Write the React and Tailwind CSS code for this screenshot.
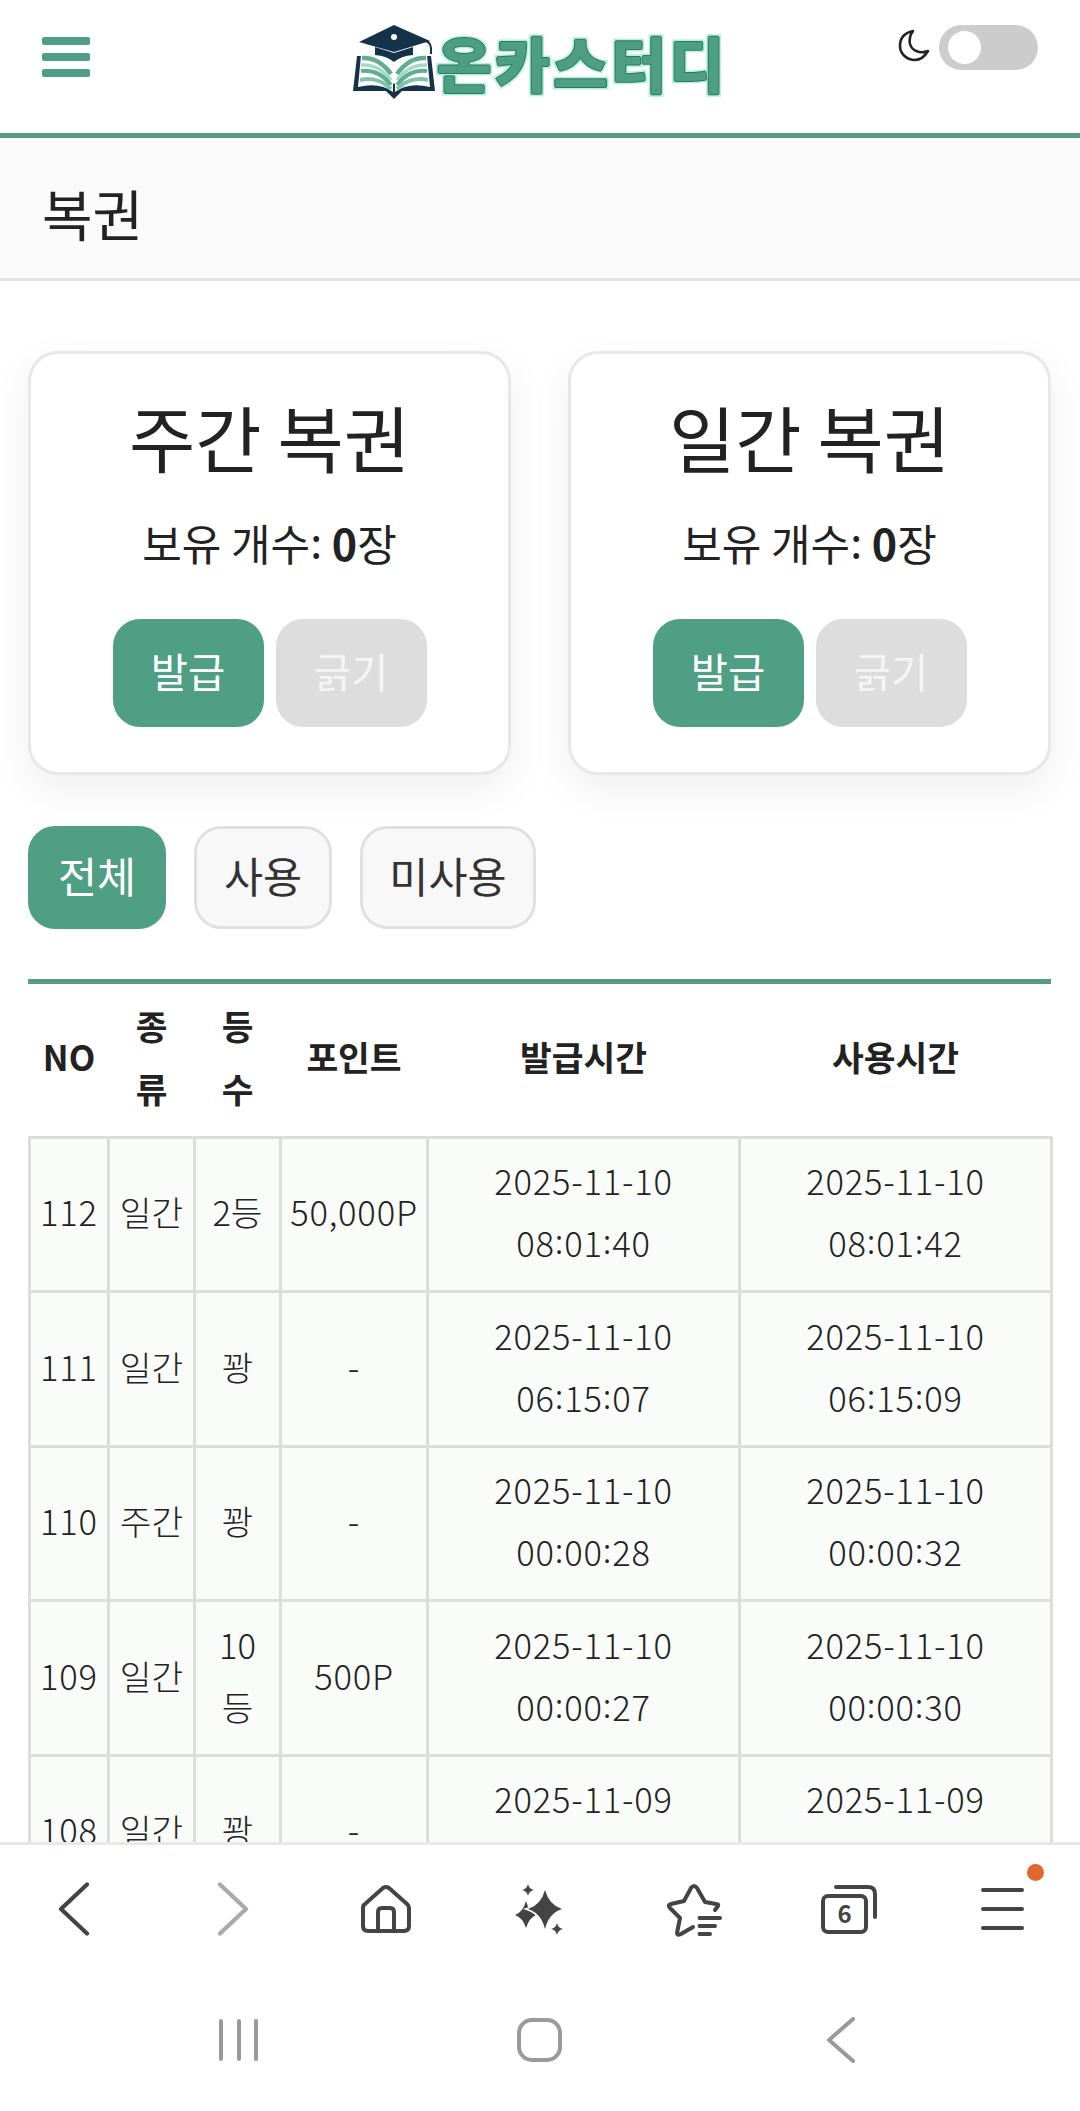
import React from "react";

const rows = [
  ["112", "일간", "2등", "50,000P", "2025-11-10", "08:01:40", "2025-11-10", "08:01:42"],
  ["111", "일간", "꽝", "-", "2025-11-10", "06:15:07", "2025-11-10", "06:15:09"],
  ["110", "주간", "꽝", "-", "2025-11-10", "00:00:28", "2025-11-10", "00:00:32"],
  ["109", "일간", "10등", "500P", "2025-11-10", "00:00:27", "2025-11-10", "00:00:30"],
  ["108", "일간", "꽝", "-", "2025-11-09", "23:59:58", "2025-11-09", "23:59:59"],
];

function LogoMark() {
  return (
    <svg width="84" height="85" viewBox="8 0 84 85" className="shrink-0">
      <path d="M12 36 L8 71 H41 L49 79 L57 71 H90 L86 36 H82 L49 64 L16 36Z" fill="#14334a" />
      <path d="M16 35 Q36 35 48 60 L48 72 Q35 62 13 67Z" fill="#ffffff" />
      <path d="M82 35 Q62 35 50 60 L50 72 Q63 62 85 67Z" fill="#ffffff" />
      <g fill="none" strokeLinecap="butt">
        <path d="M17 38 Q34 37 46 54" stroke="#5fae90" strokeWidth="4.5" />
        <path d="M16 45 Q34 44 46 60" stroke="#a9d9c6" strokeWidth="3.5" />
        <path d="M16 51 Q34 49 46 65" stroke="#5fae90" strokeWidth="4" />
        <path d="M15 60 Q33 56 46 69" stroke="#7fc4aa" strokeWidth="4" />
        <path d="M81 38 Q64 37 52 54" stroke="#5fae90" strokeWidth="4.5" />
        <path d="M82 45 Q64 44 52 60" stroke="#a9d9c6" strokeWidth="3.5" />
        <path d="M82 51 Q64 49 52 65" stroke="#5fae90" strokeWidth="4" />
        <path d="M83 60 Q65 56 52 69" stroke="#7fc4aa" strokeWidth="4" />
      </g>
      <path d="M30 27 V35 Q42 36 49 42 Q56 36 68 35 V27 L49 33Z" fill="#14334a" />
      <path d="M49 5 L14 22 L49 32 L85 21Z" fill="#14334a" />
      <circle cx="49" cy="17" r="3" fill="#ffffff" />
      <path d="M76 20 Q86 21 86 28 V34" fill="none" stroke="#14334a" strokeWidth="2" />
    </svg>
  );
}

function Colon() {
  return <span className="relative -top-[3px]">:</span>;
}

function Time({ value }) {
  const parts = value.split(":");
  return (
    <>
      {parts[0]}
      <Colon />
      {parts[1]}
      <Colon />
      {parts[2]}
    </>
  );
}

function Card({ title }) {
  return (
    <div className="flex flex-col items-center rounded-[30px] border-[3px] border-[#e8e8e8] bg-white pt-[28px] pb-[45px] shadow-[0_14px_40px_rgba(0,0,0,0.07)]">
      <div className="text-[72px] leading-[108px] text-[#222]">{title}</div>
      <div className="mt-[21px] text-[43px] leading-[63px] text-[#222]">
        보유 개수<span className="relative -top-[3px]">:</span> <span className="font-bold">0</span>장
      </div>
      <div className="mt-[45px] flex gap-[12px]">
        <div className="flex h-[108px] w-[151px] items-center justify-center rounded-[27px] bg-[#4e9f83] pb-[3px] text-[40.5px] text-white">발급</div>
        <div className="flex h-[108px] w-[151px] items-center justify-center rounded-[27px] bg-[#dddddd] pb-[3px] text-[40.5px] text-[#f5f5f5]">긁기</div>
      </div>
    </div>
  );
}

const th = "px-[14px] pb-[6px] text-center align-middle text-[34.5px] font-bold leading-[63px] text-[#222]";
const thWide = "pb-[6px] text-center align-middle text-[34.5px] font-bold leading-[63px] text-[#222]";
const td = "border-[3px] border-[#dddddd] bg-[#fafcfa] px-[8px] pt-[10px] pb-[16px] text-center align-middle text-[34.5px] font-light leading-[62px] text-[#222]";
const tdNum = "border-[3px] border-[#dddddd] bg-[#fafcfa] pt-[10px] pb-[16px] text-center align-middle text-[34.5px] font-light leading-[62px] tracking-[0.8px] text-[#222]";

function I({ w, h, vb, children, className }) {
  return (
    <svg width={w} height={h} viewBox={vb} fill="none" className={className}>
      {children}
    </svg>
  );
}

export default function App() {
  return (
    <div className="flex h-[2111px] w-[1080px] flex-col overflow-hidden bg-white font-['Noto_Sans_CJK_KR','Noto_Sans',sans-serif]">
      <div className="min-h-0 flex-1 overflow-hidden">
        <header className="grid h-[138px] grid-cols-[1fr_auto_1fr] border-b-[5px] border-[#569b84] px-[42px]">
          <div className="flex flex-col gap-[8px] pt-[37px]">
            <div className="h-[8px] w-[48px] rounded-[2px] bg-[#4e9f83]" />
            <div className="h-[8px] w-[48px] rounded-[2px] bg-[#4e9f83]" />
            <div className="h-[8px] w-[48px] rounded-[2px] bg-[#4e9f83]" />
          </div>
          <div className="flex h-[110px] items-center pt-[14px]">
            <LogoMark />
            <span className="text-[60px] font-black leading-none tracking-[3px] text-[#4d9e82] [-webkit-text-stroke:5px_#b5f0dc] [paint-order:stroke_fill] [text-shadow:1px_0_0_#2d7a62,-1px_0_0_#2d7a62,0_1px_0_#2d7a62,0_-1px_0_#2d7a62]">온카스터디</span>
          </div>
          <div className="flex items-start justify-end pt-[25px]">
            <I w={32} h={33} vb="0 0 32 33" className="mt-[4px] mr-[9px]">
              <path d="M15 2 C6 4 2 10 2 17 C2 25 9 31 17 31 C23 31 27 27 30 22 C22 25 14 22 12 15 C11 10 12 6 15 2Z" stroke="#222" strokeWidth="2.6" strokeLinejoin="round" />
            </I>
            <div className="flex h-[45px] w-[99px] items-center rounded-full bg-[#cccccc] pl-[9px]">
              <div className="h-[33px] w-[33px] rounded-full bg-white" />
            </div>
          </div>
        </header>

        <div className="flex h-[143px] items-center border-b-[3px] border-[#e2e4e7] bg-[#fafafa] px-[42px] pt-[9px] text-[55px] text-[#222]">복권</div>

        <main className="pr-[29px] pl-[28px] pt-[70px]">
          <div className="grid grid-cols-2 gap-[57px]">
            <Card title="주간 복권" />
            <Card title="일간 복권" />
          </div>

          <div className="mt-[51px] flex gap-[28px] text-[42.5px]">
            <div className="flex h-[103px] w-[138px] items-center justify-center rounded-[27px] bg-[#4e9f83] pb-[5px] text-white">전체</div>
            <div className="flex h-[103px] w-[138px] items-center justify-center rounded-[27px] border-[3px] border-[#e0e0e0] bg-[#f8f8f8] pb-[5px] text-[#333]">사용</div>
            <div className="flex h-[103px] w-[176px] items-center justify-center rounded-[27px] border-[3px] border-[#e0e0e0] bg-[#f8f8f8] pb-[5px] text-[#333]">미사용</div>
          </div>

          <div className="mt-[50px] border-t-[5px] border-[#569b84]">
            <table className="w-[1022px] table-fixed border-collapse">
              <colgroup>
                <col className="w-[79px]" />
                <col className="w-[86px]" />
                <col className="w-[86px]" />
                <col className="w-[147px]" />
                <col className="w-[312px]" />
                <col className="w-[312px]" />
              </colgroup>
              <thead>
                <tr className="h-[153px]">
                  <th className={thWide}>NO</th>
                  <th className={th}>종류</th>
                  <th className={th}>등수</th>
                  <th className={thWide}>포인트</th>
                  <th className={th}>발급시간</th>
                  <th className={th}>사용시간</th>
                </tr>
              </thead>
              <tbody>
                {rows.map((r) => (
                  <tr key={r[0]} className="h-[154.5px]">
                    <td className={tdNum}>{r[0]}</td>
                    <td className={td}>{r[1]}</td>
                    <td className={td}>{r[2]}</td>
                    <td className={tdNum}>{r[3]}</td>
                    <td className={tdNum}>{r[4]}<br /><Time value={r[5]} /></td>
                    <td className={tdNum}>{r[6]}<br /><Time value={r[7]} /></td>
                  </tr>
                ))}
              </tbody>
            </table>
          </div>
        </main>
      </div>

      <nav className="relative z-10 h-[269px] shrink-0 border-t-[3px] border-[#e8e8e8] bg-white">
        <div className="grid h-[128px] grid-cols-7 place-items-center">
          <I w={32} h={54} vb="0 0 32 54" className="mr-[6px]">
            <path d="M29 2.5 L3 27 L29 51.5" stroke="#444" strokeWidth="4.2" strokeLinecap="round" strokeLinejoin="round" />
          </I>
          <I w={32} h={54} vb="0 0 32 54" className="ml-[4px]">
            <path d="M3 2.5 L29 27 L3 51.5" stroke="#aaa" strokeWidth="4.2" strokeLinecap="round" strokeLinejoin="round" />
          </I>
          <I w={50} h={50} vb="0 0 50 50">
            <path d="M2 24 Q2 21 4 20 L22 4 Q25 2 28 4 L46 20 Q48 22 48 24 V42 Q48 47 43 47 H7 Q2 47 2 42Z" stroke="#444" strokeWidth="4" strokeLinejoin="round" />
            <path d="M17 47 V28 Q17 24 21 24 H29 Q33 24 33 28 V47" stroke="#444" strokeWidth="4" />
          </I>
          <I w={70} h={65} vb="0 0 70 65">
            <path d="M21 24 Q24 35 31 38 Q24 41 21 51 Q18 41 10 38 Q18 35 21 24Z" fill="#444" />
            <path d="M40 13 Q44 28 57 32 Q44 36 40 52 Q36 36 23 32 Q36 28 40 13Z" fill="#444" stroke="#fff" strokeWidth="3" paintOrder="stroke" />
            <path d="M23 7 Q24 12 29 13 Q24 14 23 19 Q22 14 17 13 Q22 12 23 7Z" fill="#444" />
            <path d="M52 46 Q53 51 58 52 Q53 53 52 58 Q51 53 46 52 Q51 51 52 46Z" fill="#444" />
          </I>
          <I w={70} h={65} vb="0 0 70 65" className="ml-[5px]">
            <path d="M53 33 L56 29 Q57 27 54 27 L43 25 L35 11 Q32 7 29 11 L22 24 L9 27 Q5 28 8 31 L18 41 L15 56 Q15 59 19 57 L31 50" stroke="#444" strokeWidth="4" strokeLinecap="round" strokeLinejoin="round" />
            <path d="M37.5 41 H58 M37.5 49 H53 M37.5 57 H48" stroke="#444" strokeWidth="4" strokeLinecap="round" />
          </I>
          <I w={56} h={50} vb="0 0 56 50">
            <rect x="2" y="12" width="43" height="36" rx="5" stroke="#444" strokeWidth="4" />
            <path d="M15 3 H47 Q54 3 54 10 V33" stroke="#444" strokeWidth="4" strokeLinecap="round" />
            <text x="23.5" y="39" textAnchor="middle" fontSize="24" fontWeight="700" fill="#444">6</text>
          </I>
          <div className="relative flex flex-col gap-[15px]">
            <div className="h-[4px] w-[43px] rounded-full bg-[#444]" />
            <div className="h-[4px] w-[43px] rounded-full bg-[#444]" />
            <div className="h-[4px] w-[43px] rounded-full bg-[#444]" />
            <div className="absolute -top-[24px] -right-[20px] h-[17px] w-[17px] rounded-full bg-[#e0682f]" />
          </div>
        </div>
        <div className="grid h-[134px] grid-cols-3 place-items-center px-[88px]">
          <div className="flex h-[42px] gap-[13.5px]">
            <div className="h-full w-[4px] rounded-full bg-[#9a9a9a]" />
            <div className="h-full w-[4px] rounded-full bg-[#9a9a9a]" />
            <div className="h-full w-[4px] rounded-full bg-[#9a9a9a]" />
          </div>
          <div className="h-[44px] w-[45px] rounded-[15px] border-[4px] border-[#9a9a9a]" />
          <I w={30} h={46} vb="0 0 30 46">
            <path d="M27 2 L3 23 L27 44" stroke="#9a9a9a" strokeWidth="4" strokeLinecap="round" strokeLinejoin="round" />
          </I>
        </div>
      </nav>
    </div>
  );
}
